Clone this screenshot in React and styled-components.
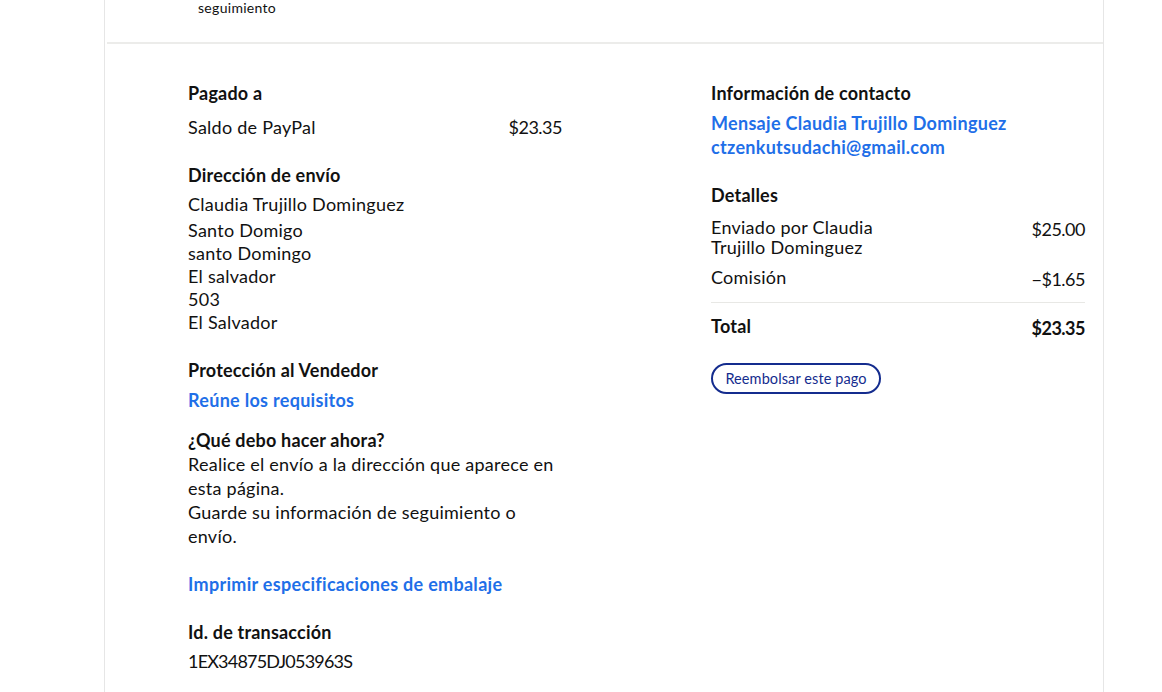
import styled, { createGlobalStyle } from "styled-components";

const Global = createGlobalStyle`
  html, body {
    margin: 0;
    padding: 0;
    background: #ffffff;
  }
  body {
    font-family: Lato, "Open Sans", sans-serif;
    color: #111111;
  }
`;

const Card = styled.div`
  margin-left: 104px;
  width: 998px;
  min-height: 692px;
  border-left: 1px solid #e6e6e6;
  border-right: 1px solid #e6e6e6;
`;

const Header = styled.div`
  height: 44px;
  margin-left: 2px;
  border-bottom: 2px solid #ececea;
  padding-left: 91px;
  box-sizing: border-box;
`;

const HeaderText = styled.div`
  font-size: 14px;
  letter-spacing: 0.3px;
  line-height: 16px;
`;

const Body = styled.div`
  display: grid;
  grid-template-columns: 374px 374px;
  column-gap: 149px;
  padding: 37px 0 0 83px;
`;

const Column = styled.div`
  display: flex;
  flex-direction: column;
`;

const Section = styled.div`
  margin-bottom: ${(p) => p.$gap || 0}px;
`;

const Title = styled.div`
  font-weight: 700;
  font-size: 18px;
  letter-spacing: 0.2px;
  line-height: 24px;
  margin-bottom: ${(p) => p.$mb || 0}px;
`;

const Line = styled.div`
  font-size: 18px;
  letter-spacing: ${(p) => (p.$digits ? "-0.8px" : "0.25px")};
  line-height: ${(p) => p.$lh || 23}px;
  margin-bottom: ${(p) => p.$mb || 0}px;
  max-width: 370px;
`;

const Row = styled.div`
  display: flex;
  justify-content: space-between;
  align-items: flex-start;
  font-size: 18px;
  letter-spacing: 0.25px;
  line-height: ${(p) => p.$lh || 20}px;
  font-weight: ${(p) => (p.$bold ? 700 : 400)};
  margin-top: ${(p) => p.$mt || 0}px;
`;

const Amount = styled.span`
  padding-top: ${(p) => (p.$flat ? 0 : 2)}px;
  letter-spacing: -0.5px;
`;

const Link = styled.a`
  display: block;
  color: #1f6fe8;
  font-weight: 700;
  font-size: 18px;
  letter-spacing: 0.3px;
  line-height: 24px;
  text-decoration: none;
`;

const Divider = styled.div`
  height: 1px;
  background: #e8e8e5;
  margin: 13px 0 13px;
`;

const Detail = styled.div`
  width: 170px;
`;

const OutlineButton = styled.button`
  align-self: flex-start;
  margin-top: 25px;
  height: 31px;
  width: 170px;
  padding: 0;
  border: 2px solid #142c8e;
  border-radius: 16px;
  background: #fff;
  color: #142c8e;
  font-family: Lato, sans-serif;
  font-size: 14.5px;
  letter-spacing: 0.1px;
`;

export default function App() {
  return (
    <>
      <Global />
      <Card>
        <Header>
          <HeaderText>seguimiento</HeaderText>
        </Header>
        <Body>
          <Column>
            <Section $gap={24}>
              <Title $mb={10}>Pagado a</Title>
              <Row $lh={24}>
                <span>Saldo de PayPal</span>
                <Amount $flat>$23.35</Amount>
              </Row>
            </Section>
            <Section $gap={24}>
              <Title $mb={6}>Dirección de envío</Title>
              <Line $lh={22} $mb={4}>Claudia Trujillo Dominguez</Line>
              <Line>Santo Domigo</Line>
              <Line>santo Domingo</Line>
              <Line>El salvador</Line>
              <Line>503</Line>
              <Line>El Salvador</Line>
            </Section>
            <Section $gap={16}>
              <Title $mb={6}>Protección al Vendedor</Title>
              <Link href="#">Reúne los requisitos</Link>
            </Section>
            <Section $gap={24}>
              <Title>¿Qué debo hacer ahora?</Title>
              <Line $lh={24}>
                Realice el envío a la dirección que aparece en esta página.
              </Line>
              <Line $lh={24}>Guarde su información de seguimiento o envío.</Line>
            </Section>
            <Section $gap={24}>
              <Link href="#">Imprimir especificaciones de embalaje</Link>
            </Section>
            <Section>
              <Title $mb={5}>Id. de transacción</Title>
              <Line $lh={24} $digits>1EX34875DJ053963S</Line>
            </Section>
          </Column>
          <Column>
            <Section $gap={24}>
              <Title $mb={6}>Información de contacto</Title>
              <Link href="#">Mensaje Claudia Trujillo Dominguez</Link>
              <Link href="#">ctzenkutsudachi@gmail.com</Link>
            </Section>
            <Section>
              <Title $mb={10}>Detalles</Title>
              <Row>
                <Detail>Enviado por Claudia Trujillo Dominguez</Detail>
                <Amount>$25.00</Amount>
              </Row>
              <Row $mt={10}>
                <span>Comisión</span>
                <Amount>−$1.65</Amount>
              </Row>
              <Divider />
              <Row $bold>
                <span>Total</span>
                <Amount>$23.35</Amount>
              </Row>
            </Section>
            <OutlineButton>Reembolsar este pago</OutlineButton>
          </Column>
        </Body>
      </Card>
    </>
  );
}
